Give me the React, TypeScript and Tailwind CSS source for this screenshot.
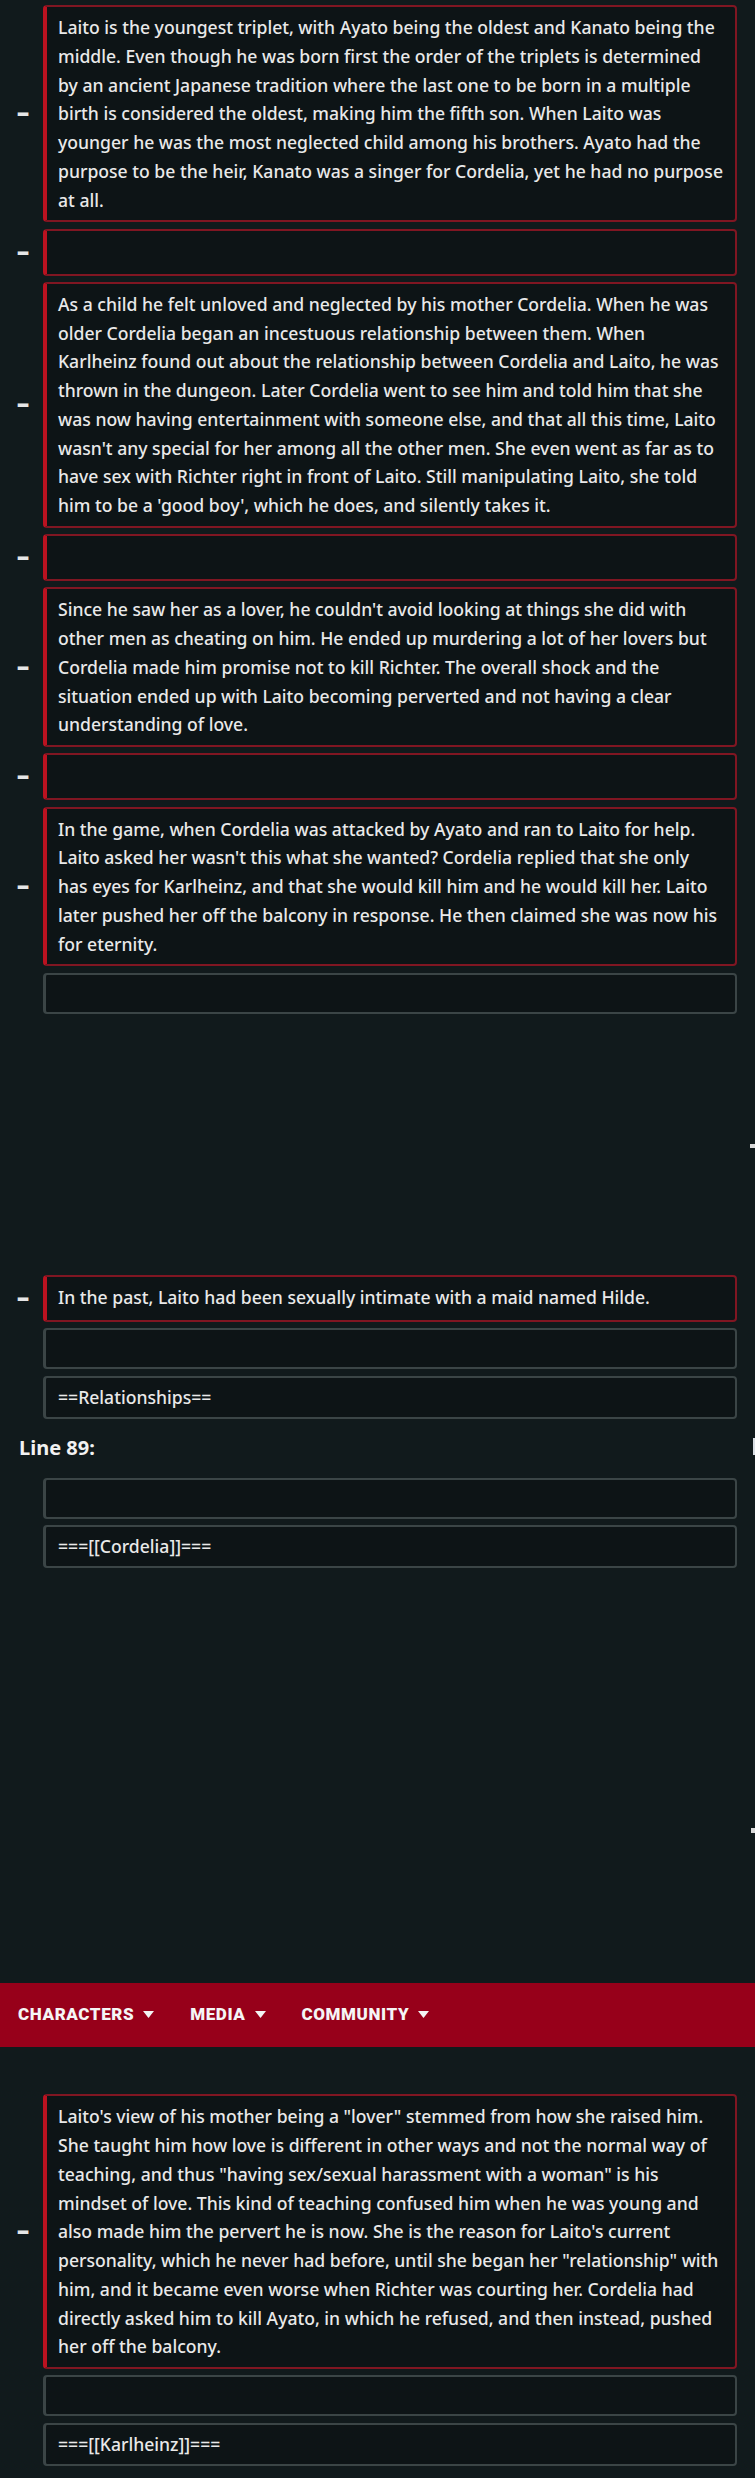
import React from "react";

type Row =
  | { kind: "del"; text: string }
  | { kind: "ctx"; text: string }
  | { kind: "space"; cls: string }
  | { kind: "label"; text: string }
  | { kind: "nav" };

const rows: Row[] = [
  {
    kind: "del",
    text: "Laito is the youngest triplet, with Ayato being the oldest and Kanato being the middle. Even though he was born first the order of the triplets is determined by an ancient Japanese tradition where the last one to be born in a multiple birth is considered the oldest, making him the fifth son. When Laito was younger he was the most neglected child among his brothers. Ayato had the purpose to be the heir, Kanato was a singer for Cordelia, yet he had no purpose at all.",
  },
  { kind: "del", text: "" },
  {
    kind: "del",
    text: "As a child he felt unloved and neglected by his mother Cordelia. When he was older Cordelia began an incestuous relationship between them. When Karlheinz found out about the relationship between Cordelia and Laito, he was thrown in the dungeon. Later Cordelia went to see him and told him that she was now having entertainment with someone else, and that all this time, Laito wasn't any special for her among all the other men. She even went as far as to have sex with Richter right in front of Laito. Still manipulating Laito, she told him to be a 'good boy', which he does, and silently takes it.",
  },
  { kind: "del", text: "" },
  {
    kind: "del",
    text: "Since he saw her as a lover, he couldn't avoid looking at things she did with other men as cheating on him. He ended up murdering a lot of her lovers but Cordelia made him promise not to kill Richter. The overall shock and the situation ended up with Laito becoming perverted and not having a clear understanding of love.",
  },
  { kind: "del", text: "" },
  {
    kind: "del",
    text: "In the game, when Cordelia was attacked by Ayato and ran to Laito for help. Laito asked her wasn't this what she wanted? Cordelia replied that she only has eyes for Karlheinz, and that she would kill him and he would kill her. Laito later pushed her off the balcony in response. He then claimed she was now his for eternity.",
  },
  { kind: "ctx", text: "" },
  { kind: "space", cls: "h-[249px]" },
  { kind: "del", text: "In the past, Laito had been sexually intimate with a maid named Hilde." },
  { kind: "ctx", text: "" },
  { kind: "ctx", text: "==Relationships==" },
  { kind: "label", text: "Line 89:" },
  { kind: "ctx", text: "" },
  { kind: "ctx", text: "===[[Cordelia]]===" },
  { kind: "space", cls: "h-[402px]" },
  { kind: "nav" },
  { kind: "space", cls: "h-[35px]" },
  {
    kind: "del",
    text: "Laito's view of his mother being a \"lover\" stemmed from how she raised him. She taught him how love is different in other ways and not the normal way of teaching, and thus \"having sex/sexual harassment with a woman\" is his mindset of love. This kind of teaching confused him when he was young and also made him the pervert he is now. She is the reason for Laito's current personality, which he never had before, until she began her \"relationship\" with him, and it became even worse when Richter was courting her. Cordelia had directly asked him to kill Ayato, in which he refused, and then instead, pushed her off the balcony.",
  },
  { kind: "ctx", text: "" },
  { kind: "ctx", text: "===[[Karlheinz]]===" },
];

const Caret = () => (
  <svg width="11" height="7" viewBox="0 0 11 7" className="ml-[9px]">
    <path d="M0 0h11L5.5 7z" fill="#f3f3f3" />
  </svg>
);

const DelLine = ({ text }: { text: string }) => (
  <div className="flex items-center">
    <div className="w-[43px] shrink-0 pl-[3px] text-center">
      <span className="inline-block scale-y-[1.8] font-['DejaVu_Sans',sans-serif] text-[17px] font-bold leading-none text-[#e6e6e6]">
        −
      </span>
    </div>
    <div className="w-[694px] min-h-[47px] rounded-[4px] border-2 border-l-[4px] border-[#801622] border-l-[#bb1220] bg-[#0d1416] py-[6px] pl-[11px] pr-[12px] text-[#e9e9e9]">
      {text}
    </div>
  </div>
);

const CtxLine = ({ text }: { text: string }) => (
  <div className="flex">
    <div className="w-[43px] shrink-0" />
    <div
      className={
        "w-[694px] rounded-[4px] border-2 border-l-[3px] border-[#3b4546] bg-[#0d1416] py-[5px] pl-[12px] pr-[12px] text-[#e9e9e9] " +
        (text ? "min-h-[43px]" : "h-[41px]")
      }
    >
      {text}
    </div>
  </div>
);

export default function App() {
  return (
    <div className="relative w-[755px] min-h-[2478px] overflow-hidden bg-[#111a1c] pt-[5px] font-['Noto_Sans',sans-serif] text-[17.6px] font-medium leading-[28.75px]">
      <div className="flex flex-col gap-[6.25px]">
        {rows.map((row, i) => {
          if (row.kind === "del") return <DelLine key={i} text={row.text} />;
          if (row.kind === "ctx") return <CtxLine key={i} text={row.text} />;
          if (row.kind === "space") return <div key={i} className={row.cls} />;
          if (row.kind === "label")
            return (
              <div key={i} className="flex h-[47px] items-center pl-[19px] text-[20px] font-bold text-[#f2f2f2]">
                {row.text}
              </div>
            );
          return (
            <nav
              key={i}
              className="flex h-[64px] items-center gap-[36px] bg-[#97001a] pl-[18px] font-['Roboto',sans-serif] text-[17px] font-black uppercase tracking-[0.6px] text-[#f5f5f5]"
            >
              {["Characters", "Media", "Community"].map((n) => (
                <div key={n} className="flex items-center">
                  {n}
                  <Caret />
                </div>
              ))}
            </nav>
          );
        })}
      </div>

      {/* edge of the right-hand column, cut off by the window */}
      <div className="absolute left-[750px] top-[1144px] h-[4px] w-[5px] bg-[#d8d8d8]" />
      <div className="absolute left-[753px] top-[1438px] h-[17px] w-[2px] bg-[#d8dde2]" />
      <div className="absolute left-[751px] top-[1828px] h-[5px] w-[4px] bg-[#d8d8d8]" />
    </div>
  );
}
